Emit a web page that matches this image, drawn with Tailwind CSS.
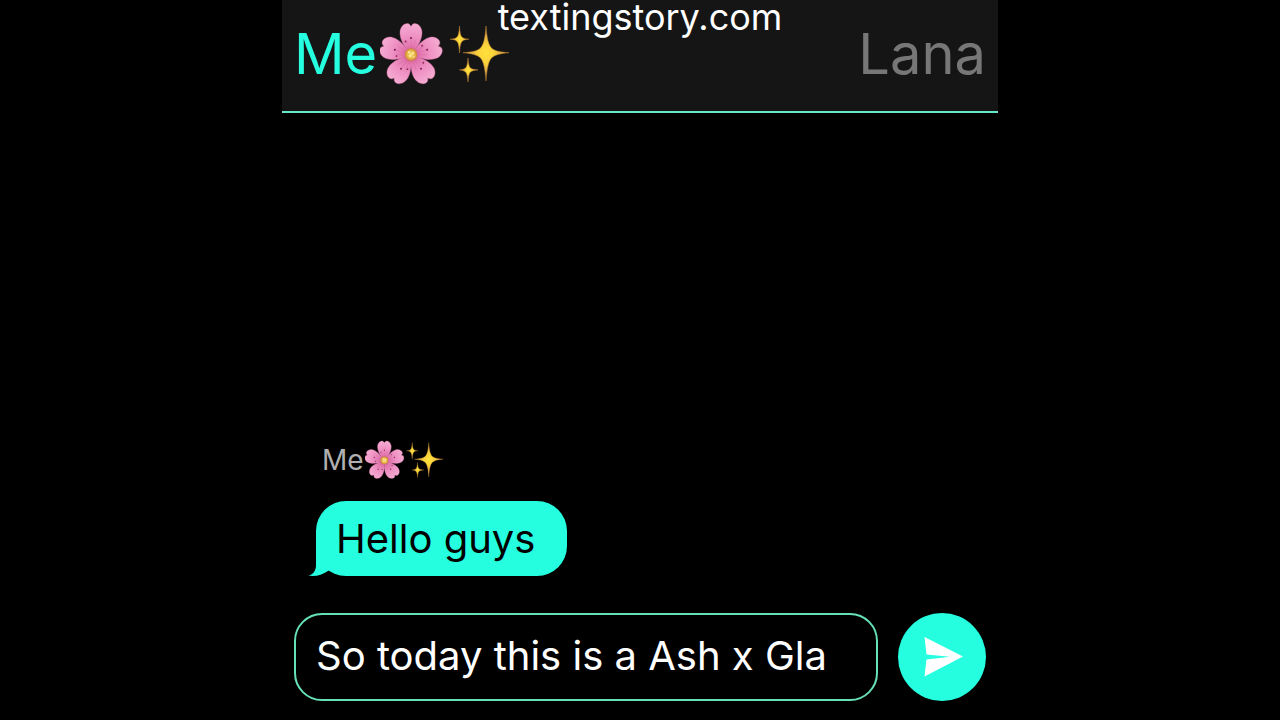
<!DOCTYPE html>
<html lang="en">
<head>
<meta charset="utf-8">
<meta name="viewport" content="width=device-width, initial-scale=1">
<title>textingstory.com</title>
<script src="https://cdn.jsdelivr.net/npm/@tailwindcss/browser@4"></script>
</head>
<body class="bg-black font-['Inter','Liberation_Sans',sans-serif] text-white">
<!-- Shared emoji artwork -->
<svg class="absolute size-0" aria-hidden="true">
  <defs>
    <radialGradient id="petalFill" gradientUnits="userSpaceOnUse" cx="31" cy="33" r="32">
      <stop offset="0" stop-color="#c9457f"/><stop offset=".3" stop-color="#e47cb3"/><stop offset=".65" stop-color="#f095c6"/><stop offset="1" stop-color="#f5aed3"/>
    </radialGradient>
    <radialGradient id="coreFill"><stop offset="0" stop-color="#fbe58a"/><stop offset=".6" stop-color="#e9b94a"/><stop offset="1" stop-color="#c98038"/></radialGradient>
    <radialGradient id="starFill"><stop offset="0" stop-color="#ffe23c"/><stop offset=".35" stop-color="#fbd13a"/><stop offset=".75" stop-color="#d9a04a"/><stop offset="1" stop-color="#a8683c"/></radialGradient>
    <g id="petal">
      <path d="M31 33C26 27 19.500 18 20 10C20.300 5 24 1.500 27.500 1.600C29.500 1.700 30.300 3.500 31 4.500C31.700 3.500 32.500 1.700 34.500 1.600C38 1.500 41.700 5 42 10C42.500 18 36 27 31 33Z" fill="url(#petalFill)" stroke="#dc70a8" stroke-width=".4"/>
      <path d="M31 26V16M28.500 25L26.500 18M33.500 25L35.500 18" stroke="#d65f9b" stroke-width=".6" opacity=".6"/>
      <circle cx="31" cy="16" r="1" fill="#7c1c46"/><circle cx="25.500" cy="19.500" r=".9" fill="#8c2652"/>
    </g>
    <symbol id="blossom" viewBox="0 0 64 64">
      <use href="#petal"/>
      <use href="#petal" transform="rotate(72 31 33)"/>
      <use href="#petal" transform="rotate(144 31 33)"/>
      <use href="#petal" transform="rotate(216 31 33)"/>
      <use href="#petal" transform="rotate(288 31 33)"/>
      <circle cx="31" cy="32.500" r="6.300" fill="url(#coreFill)"/>
      <g fill="#fff0a6"><circle cx="29" cy="30" r="1"/><circle cx="33" cy="31" r="1"/><circle cx="30" cy="34" r="1"/><circle cx="34" cy="35" r=".8"/></g>
    </symbol>
    <symbol id="sparkles" viewBox="0 0 64 64">
      <g fill="url(#starFill)" stroke="#b98030" stroke-width=".5">
        <path d="M38 4C39 17 40.500 23 44 26.500C47 29 52 30 61 30.700C52 31.500 47 33 44 35.500C40.500 39 39 46 38 59C37 46 35.500 39 32 35.500C29 33 24 31.500 15 30.700C24 30 29 29 32 26.500C35.500 23 37 17 38 4Z"/>
        <path d="M11.500 4C12 11 12.600 13.500 14 15C15.400 16.400 17 16.800 21 17.200C17 17.600 15.400 18 14 19.400C12.600 21 12 24 11.500 31C11 24 10.400 21 9 19.400C7.600 18 6 17.600 2 17.200C6 16.800 7.600 16.400 9 15C10.400 13.500 11 11 11.500 4Z"/>
        <path d="M20 36C20.500 42 21.100 44.500 22.500 46C24 47.200 26 47.500 30 47.900C26 48.300 24 48.700 22.500 50C21.100 51.500 20.500 54 20 60C19.500 54 18.900 51.500 17.500 50C16 48.700 15 48.300 11.500 47.900C15 47.500 16 47.200 17.500 46C18.900 44.500 19.500 42 20 36Z"/>
      </g>
    </symbol>
  </defs>
</svg>

<div class="relative mx-auto flex min-h-screen w-full max-w-[716px] flex-col">
  <p class="absolute inset-x-0 top-0 text-center text-[36px] leading-[34px]">textingstory.com</p>
  <header class="flex h-[113px] items-start justify-between border-b-2 border-[#66e8cb] bg-[#151515] px-3 pt-[22px] text-[56px] leading-16">
    <div class="flex items-center text-[#25ffe0]">
      <span>Me</span>
      <svg class="ml-[3px] size-16" role="img" aria-label="Cherry blossom"><use href="#blossom"/></svg>
      <svg class="ml-1 size-16" role="img" aria-label="Sparkles"><use href="#sparkles"/></svg>
    </div>
    <span class="text-[#777777]">Lana</span>
  </header>

  <main class="flex flex-1 flex-col items-start justify-end pb-[37px] pl-[34px]">
    <div class="mb-[21px] ml-[6px] flex items-center text-[28px] leading-10 text-[#b0b0b0]">
      <span>Me</span>
      <svg class="ml-px size-10" role="img" aria-label="Cherry blossom"><use href="#blossom"/></svg>
      <svg class="size-10" role="img" aria-label="Sparkles"><use href="#sparkles"/></svg>
    </div>
    <div class="relative rounded-[30px] bg-[#25ffe0] pr-8 pl-5 text-[40px] leading-[75px] text-black">
      <svg class="absolute bottom-0 -left-2 h-10 w-8" viewBox="0 0 32 40" aria-hidden="true"><path d="M8 0V29C8 35 5 39 0 39.500C7 41 14 39 20 35L30 28L24 0Z" fill="#25ffe0"/></svg>
      <span class="relative">Hello guys</span>
    </div>
  </main>

  <form class="flex items-center gap-5 pr-3 pb-[19px] pl-3">
    <input type="text" aria-label="Message" value="So today this is a Ash x Gla" class="h-[88px] min-w-0 flex-1 rounded-[28px] border-2 border-[#66e0b8] bg-black px-5 pb-1 text-[40px] text-white outline-none">
    <button type="button" aria-label="Send" class="flex size-[88px] shrink-0 items-center justify-center rounded-full bg-[#25ffe0]">
      <svg class="size-12" viewBox="0 0 48 48" aria-hidden="true"><path d="M6.500 4L45 23.500L6.500 43.500L8.500 26.500L32 23.700L8.500 21.500Z" fill="#fff"/></svg>
    </button>
  </form>
</div>
</body>
</html>
